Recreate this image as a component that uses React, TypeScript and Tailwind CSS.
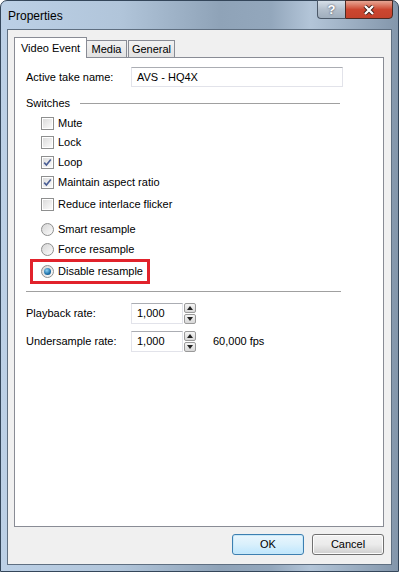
import React from "react";

const font = { fontFamily: '"Liberation Sans", Arial, sans-serif' };

function CheckBox({ checked, label }: { checked?: boolean; label: string }) {
  return (
    <div className="flex items-center h-[19px] pl-[15px]">
      <div className="w-[13px] h-[13px] border border-[#8e8f8f] bg-white p-px">
        <div className="w-full h-full bg-gradient-to-br from-[#dcdcdc] to-[#fbfbfb] flex items-center justify-center">
          {checked && (
            <svg width="9" height="9" viewBox="0 0 9 9">
              <path d="M1.2 4.6 L3.4 7 L7.8 1.4" fill="none" stroke="#4b5f95" strokeWidth="1.6" />
            </svg>
          )}
        </div>
      </div>
      <span className="ml-[4px] text-[11px] text-black">{label}</span>
    </div>
  );
}

function Radio({ checked, label }: { checked?: boolean; label: string }) {
  return (
    <div className="flex items-center h-[19px]">
      <div className="w-[13px] h-[13px] rounded-full border border-[#8e8f8f] bg-gradient-to-br from-[#d5d5d5] to-[#fcfcfc] flex items-center justify-center">
        {checked && (
          <div className="w-[7px] h-[7px] rounded-full bg-[radial-gradient(circle_at_40%_35%,#8fd3f5,#1b6fa8_60%,#0b3f6b)]" />
        )}
      </div>
      <span className="ml-[4px] text-[11px] text-black">{label}</span>
    </div>
  );
}

function Spin() {
  return (
    <div className="ml-px w-[12px] h-[21px] flex flex-col gap-px">
      {[0, 1].map((i) => (
        <div
          key={i}
          className="flex-1 border border-[#9a9a9a] rounded-[2px] bg-gradient-to-b from-[#f4f4f4] to-[#d8d8d8] flex items-center justify-center"
        >
          <svg width="6" height="4" viewBox="0 0 6 4">
            {i === 0 ? <path d="M0 4 L3 0 L6 4 Z" fill="#222" /> : <path d="M0 0 L3 4 L6 0 Z" fill="#222" />}
          </svg>
        </div>
      ))}
    </div>
  );
}

function NumBox({ value }: { value: string }) {
  return (
    <div className="flex items-center">
      <div className="w-[52px] h-[21px] border border-[#e2e3ea] border-t-[#abadb3] bg-white flex items-center pl-[5px] text-[11px]">
        {value}
      </div>
      <Spin />
    </div>
  );
}

export default function App() {
  return (
    <div className="w-[399px] h-[572px] bg-white" style={font}>
      <div className="w-full h-full rounded-t-[7px] border border-[#34465a] bg-[linear-gradient(90deg,#bcd0e6_0%,#b1c5da_30%,#8fa3b8_55%,#93a7bc_68%,#b3c5d8_78%,#8396ab_100%)] flex flex-col">
        <div className="h-[28px] flex items-start">
          <div className="pl-[7px] pt-[6px] text-[12px] text-black flex-1">Properties</div>
          <div className="flex mr-[5px] -mt-px">
            <div className="w-[28px] h-[19px] border border-[#4b5868] border-r-0 rounded-bl-[4px] bg-gradient-to-b from-[#d6dfe9] via-[#b3bfcc] to-[#a0aebd] flex items-center justify-center">
              <span className="text-white text-[13px] font-bold leading-none [text-shadow:0_0_2px_#334]">?</span>
            </div>
            <div className="w-[48px] h-[19px] border border-[#4b2a24] rounded-br-[4px] bg-gradient-to-b from-[#e6a594] via-[#cc4630] to-[#c4422c] flex items-center justify-center">
              <svg width="12" height="10" viewBox="0 0 12 10">
                <path d="M2 1 L10 9 M10 1 L2 9" stroke="#3a1a14" strokeWidth="4" />
                <path d="M2 1 L10 9 M10 1 L2 9" stroke="#ffffff" strokeWidth="2.4" />
              </svg>
            </div>
          </div>
        </div>
        <div className="mx-[6px] mb-[6px] flex-1 border border-[#5f6f81] bg-[#f0f0f0] flex flex-col pl-[6px] pr-[7px] pt-[7px]">
          <div className="flex items-end h-[20px]">
            <div className="relative z-10 -mb-px w-[73px] h-[21px] border border-[#898c95] border-b-0 bg-white text-[11px] flex items-start justify-center pt-[2px]">
              Video Event
            </div>
            <div className="w-[40px] h-[17px] border border-l-0 border-b-0 border-[#898c95] bg-gradient-to-b from-[#f2f2f2] to-[#e2e2e2] text-[11px] flex items-center justify-center">
              Media
            </div>
            <div className="w-[47px] h-[17px] ml-px border border-b-0 border-[#898c95] bg-gradient-to-b from-[#f2f2f2] to-[#e2e2e2] text-[11px] flex items-center justify-center">
              General
            </div>
          </div>
          <div className="w-[370px] h-[470px] border border-[#898c95] bg-white pl-[11px] pt-[9px] text-[11px] text-black flex flex-col">
            <div className="flex items-center h-[20px]">
              <span className="w-[105px]">Active take name:</span>
              <div className="w-[212px] h-[20px] border border-[#e2e3ea] border-t-[#abadb3] flex items-center pl-[5px]">
                AVS - HQ4X
              </div>
            </div>
            <div className="mt-[8px] h-[16px] flex items-center">
              <span>Switches</span>
              <div className="ml-[10px] w-[260px] h-px bg-[#a0a0a0]" />
            </div>
            <div className="mt-[3px]">
              <CheckBox label="Mute" />
            </div>
            <CheckBox label="Lock" />
            <div className="mt-px">
              <CheckBox checked label="Loop" />
            </div>
            <div className="mt-px">
              <CheckBox checked label="Maintain aspect ratio" />
            </div>
            <div className="mt-[3px]">
              <CheckBox label="Reduce interlace flicker" />
            </div>
            <div className="mt-[6px] pl-[15px]">
              <Radio label="Smart resample" />
            </div>
            <div className="mt-px pl-[15px]">
              <Radio label="Force resample" />
            </div>
            <div className="ml-[4px] w-[120px] h-[25px] border-[3px] border-[#e1222b] pl-[8px] flex items-center">
              <Radio checked label="Disable resample" />
            </div>
            <div className="mt-[7px] w-[315px] h-px bg-[#a0a0a0]" />
            <div className="mt-[11px] flex items-center h-[21px]">
              <span className="w-[105px]">Playback rate:</span>
              <NumBox value="1,000" />
            </div>
            <div className="mt-[7px] flex items-center h-[21px]">
              <span className="w-[105px]">Undersample rate:</span>
              <NumBox value="1,000" />
              <span className="ml-[17px]">60,000 fps</span>
            </div>
          </div>
          <div className="mt-[7px] flex justify-end gap-[8px]">
            <button className="w-[72px] h-[21px] rounded-[3px] border border-[#3c7fb1] bg-gradient-to-b from-[#eaf6fd] via-[#d9f0fc] to-[#bee6fd] text-[11px] text-black shadow-[inset_0_0_0_1px_#c8e8f8]">
              OK
            </button>
            <button className="w-[72px] h-[21px] rounded-[3px] border border-[#707070] bg-gradient-to-b from-[#f2f2f2] via-[#ebebeb] to-[#cfcfcf] text-[11px] text-black shadow-[inset_0_0_0_1px_#fcfcfc]">
              Cancel
            </button>
          </div>
        </div>
      </div>
    </div>
  );
}
